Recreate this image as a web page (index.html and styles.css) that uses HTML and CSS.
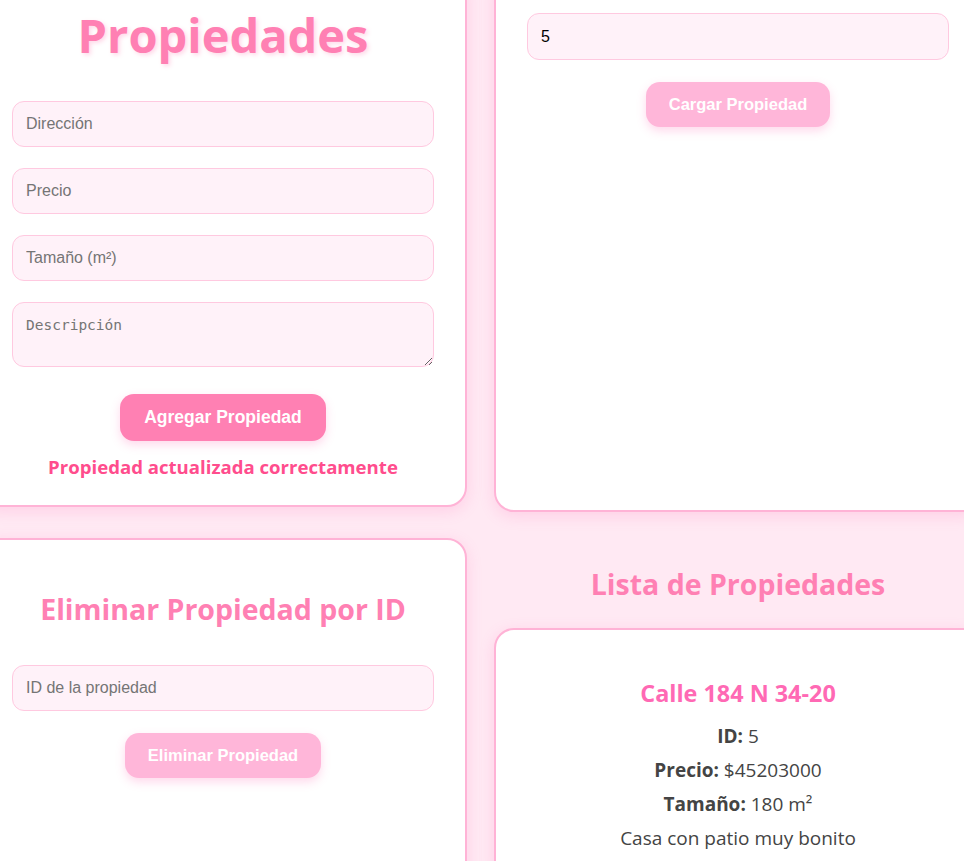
FILE: index.html
```html
<!DOCTYPE html>
<html lang="es">
<head>
    <meta charset="UTF-8">
    <meta name="viewport" content="width=device-width, initial-scale=1.0">
    <title>Propiedades</title>
    <link rel="stylesheet" href="styles.css">
</head>
<body>
    <div class="container">
        <section class="card form-card">
            <h1>Propiedades</h1>
            <form class="form">
                <input type="text" placeholder="Dirección">
                <input type="number" placeholder="Precio">
                <input type="number" placeholder="Tamaño (m²)">
                <textarea placeholder="Descripción"></textarea>
                <button type="button" class="btn">Agregar Propiedad</button>
            </form>
            <p class="message">Propiedad actualizada correctamente</p>
        </section>

        <section class="card load-card">
            <div class="form">
                <input type="number" value="5">
                <button type="button" class="btn btn-light">Cargar Propiedad</button>
            </div>
        </section>

        <section class="card delete-card">
            <h2>Eliminar Propiedad por ID</h2>
            <div class="form">
                <input type="number" placeholder="ID de la propiedad">
                <button type="button" class="btn btn-light">Eliminar Propiedad</button>
            </div>
        </section>

        <section class="list">
            <h2>Lista de Propiedades</h2>
            <div class="card property">
                <h3>Calle 184 N 34-20</h3>
                <p><strong>ID:</strong> 5</p>
                <p><strong>Precio:</strong> $45203000</p>
                <p><strong>Tamaño:</strong> 180 m²</p>
                <p>Casa con patio muy bonito</p>
            </div>
        </section>
    </div>
</body>
</html>
```

FILE: styles.css
```css
* {
    box-sizing: border-box;
}

html, body {
    overflow: hidden;
}

body {
    margin: 0;
    font-family: "Segoe UI", "Open Sans", sans-serif;
    background-color: #ffe9f3;
    color: #444;
}

.container {
    display: grid;
    grid-template-columns: 488px 488px;
    gap: 26px 27px;
    align-items: start;
    margin: -30px 0 0 -21px;
}

.card {
    background: #fff;
    border: 2px solid #ffb3d6;
    border-radius: 20px;
    box-shadow: 0 4px 15px rgba(255, 105, 180, 0.2);
    padding: 28px 31px;
}

h1 {
    margin: 4px 0 35px;
    font-size: 47px;
    line-height: 62px;
    text-align: center;
    color: #ff80b3;
    text-shadow: 2px 2px 4px rgba(255, 128, 179, 0.3);
}

h2 {
    margin: 0;
    font-size: 28.5px;
    text-align: center;
    color: #ff80b3;
}

.form {
    display: flex;
    flex-direction: column;
    gap: 21px;
}

.form input, .form textarea {
    width: 100%;
    height: 46px;
    padding: 12px 13px;
    border: 1px solid #ffc9e0;
    border-radius: 12px;
    background: #fff2f9;
    font-family: "Liberation Sans", Arial, sans-serif;
    font-size: 16px;
    outline: none;
}

.form textarea {
    height: 65px;
    font-family: "DejaVu Sans Mono", monospace;
    font-size: 14.5px;
    padding: 14px 13px;
}

.btn {
    align-self: center;
    height: 47px;
    margin-top: 6px;
    padding: 0 24px;
    border: none;
    border-radius: 14px;
    background-color: #ff80b3;
    color: #fff;
    font-family: "Liberation Sans", Arial, sans-serif;
    font-weight: bold;
    font-size: 17.5px;
    box-shadow: 0 4px 10px rgba(255, 105, 180, 0.25);
    cursor: pointer;
}

.btn-light {
    height: 45px;
    margin-top: 1px;
    padding: 0 23px;
    font-size: 16.5px;
    background-color: #ffb6d9;
}

.message {
    margin: 13px 0 0;
    text-align: center;
    font-size: 18.6px;
    font-weight: bold;
    color: #ff4d8d;
}

.form-card {
    padding-bottom: 26px;
}

.load-card {
    min-height: 542px;
    padding-top: 41px;
}

.load-card input {
    height: 47px;
    color: #000;
}

.delete-card {
    padding-top: 50px;
    min-height: 400px;
}

.delete-card h2 {
    margin-bottom: 37px;
}

.list h2 {
    margin: 27px 0 25px;
}

.property {
    padding: 47px 31px 20px;
    text-align: center;
}

.property h3 {
    margin: 0 0 15px;
    font-size: 23.4px;
    color: #ff69b4;
}

.property p {
    margin: 10px 0;
    font-size: 19px;
    line-height: 24px;
}
```
